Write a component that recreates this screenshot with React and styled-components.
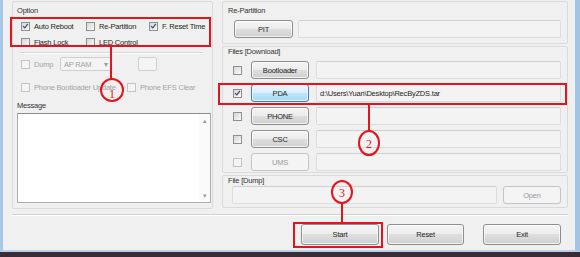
import React from "react";
import styled, { createGlobalStyle, css } from "styled-components";

const GlobalStyle = createGlobalStyle`
    html, body {
        margin: 0;
        padding: 0;
        background: #3a2c36;
    }
    body {
        font-family: "Liberation Sans", Arial, sans-serif;
        font-size: 7.5px;
        letter-spacing: -0.2px;
        color: #1e1e1e;
    }
`;

const Tick = () => (
    <svg width="8" height="8" viewBox="0 0 8 8">
        <path d="M1.2 4.2 L3.2 6.2 L6.8 1.6" fill="none" stroke="#3a4a6a" strokeWidth="1.4" />
    </svg>
);

const Check = ({ checked, disabled, label, width }) => (
    <CheckRow $width={width} $disabled={disabled}>
        <Box $disabled={disabled}>{checked && <Tick />}</Box>
        {label && <span>{label}</span>}
    </CheckRow>
);

/**
 * Name: OdinWindow
 */
const App = () => {
    const files = [
        { name: "Bootloader" },
        { name: "PDA", checked: true, active: true, path: "d:\\Users\\Yuan\\Desktop\\RecByZDS.tar" },
        { name: "PHONE" },
        { name: "CSC" },
        { name: "UMS", disabled: true },
    ];

    return (
        <Screen>
            <GlobalStyle />
            <Window>
                <Top>
                    <LeftPanel>
                        <Caption>Option</Caption>
                        <OptionGrid>
                            <Check checked label="Auto Reboot" />
                            <Check label="Re-Partition" />
                            <Check checked label="F. Reset Time" />
                            <Check label="Flash Lock" />
                            <Check label="LED Control" />
                        </OptionGrid>
                        <Rule />
                        <DumpRow>
                            <Check disabled label="Dump" width={39} />
                            <Select>
                                <span>AP RAM</span>
                                <Arrow>▾</Arrow>
                            </Select>
                            <SmallBox />
                        </DumpRow>
                        <PhoneRow>
                            <Check disabled label="Phone Bootloader Update" width={106} />
                            <Check disabled label="Phone EFS Clear" />
                        </PhoneRow>
                        <Caption $top={8}>Message</Caption>
                        <MessageBox>
                            <MessageText />
                            <ScrollBar>
                                <span>▴</span>
                                <span>▾</span>
                            </ScrollBar>
                        </MessageBox>
                    </LeftPanel>

                    <RightColumn>
                        <Group $height={43}>
                            <Caption $top={4}>Re-Partition</Caption>
                            <PitRow>
                                <Button $w={59} $h={18}>PIT</Button>
                                <Field />
                            </PitRow>
                        </Group>
                        <Group $height={127}>
                            <Caption>Files [Download]</Caption>
                            <FileList>
                                {files.map((f) => (
                                    <FileRow key={f.name}>
                                        <CheckCell>
                                            <Box $disabled={f.disabled}>{f.checked && <Tick />}</Box>
                                        </CheckCell>
                                        <Button $w={58} $h={18} $active={f.active} $disabled={f.disabled}>
                                            {f.name}
                                        </Button>
                                        <Field>{f.path}</Field>
                                    </FileRow>
                                ))}
                            </FileList>
                        </Group>
                        <Group $height={33}>
                            <Caption>File [Dump]</Caption>
                            <DumpFileRow>
                                <Field />
                                <Button $w={58} $h={18} $disabled>Open</Button>
                            </DumpFileRow>
                        </Group>
                    </RightColumn>
                </Top>
                <Separator />
                <ButtonBar>
                    <Button $w={78} $h={21}>Start</Button>
                    <Button $w={77} $h={21}>Reset</Button>
                    <Button $w={78} $h={21} $gap={11}>Exit</Button>
                </ButtonBar>
            </Window>

            <Marks width="580" height="257" viewBox="0 0 580 257">
                <g fill="none" stroke="#e3141c" strokeWidth="2">
                    <rect x="11" y="18" width="199" height="28" />
                    <line x1="111" y1="47" x2="111" y2="79" />
                    <ellipse cx="112" cy="90" rx="11" ry="11" />
                    <rect x="219" y="84" width="347" height="20" />
                    <line x1="369" y1="105" x2="369" y2="131" />
                    <ellipse cx="369" cy="143" rx="10" ry="12" />
                    <line x1="342" y1="203" x2="342" y2="222" />
                    <ellipse cx="342" cy="192" rx="10" ry="11" />
                    <rect x="294" y="223" width="88" height="24" />
                </g>
                <g fill="#e3141c" fontFamily="Liberation Serif, serif" fontSize="12" textAnchor="middle">
                    <text x="112" y="98">1</text>
                    <text x="369" y="148">2</text>
                    <text x="342" y="197">3</text>
                </g>
            </Marks>
        </Screen>
    );
};

export default React.memo(App);

const Screen = styled.div`
    position: relative;
    width: 580px;
    height: 257px;
    overflow: hidden;
    background: #3a2c36;
`;

const Window = styled.div`
    box-sizing: border-box;
    height: 252px;
    display: flex;
    flex-direction: column;
    padding: 1px 7px 0 9px;
    background: #f0f0f0;
    border-left: 3px solid #a9c8e8;
    border-right: 5px solid #a4c4e6;
    border-bottom: 2px solid #b8d1ec;
`;

const Top = styled.div`
    display: flex;
    gap: 9px;
    height: 208px;
`;

const panelBox = css`
    box-sizing: border-box;
    border: 1px solid #dadada;
    border-radius: 2px;
`;

const LeftPanel = styled.section`
    ${panelBox};
    width: 201px;
    height: 208px;
    padding: 4px 0 0 4px;
    display: flex;
    flex-direction: column;
`;

const Caption = styled.div`
    height: 10px;
    line-height: 10px;
    color: #333;
    margin-top: ${(p) => p.$top || 0}px;
`;

const OptionGrid = styled.div`
    display: grid;
    grid-template-columns: 65px 63px auto;
    row-gap: 4px;
    margin-top: 4px;
    padding-left: 4px;
`;

const CheckRow = styled.label`
    display: flex;
    align-items: center;
    gap: 4px;
    height: 12px;
    width: ${(p) => (p.$width ? `${p.$width}px` : "auto")};
    flex-shrink: 0;
    color: ${(p) => (p.$disabled ? "#a3a3a3" : "#1e1e1e")};
    white-space: nowrap;
`;

const Box = styled.span`
    box-sizing: border-box;
    width: 9px;
    height: 9px;
    display: flex;
    align-items: center;
    justify-content: center;
    border: 1px solid ${(p) => (p.$disabled ? "#c4c4c4" : "#8f8f8f")};
    background: ${(p) =>
        p.$disabled ? "#f4f4f4" : "linear-gradient(135deg, #d6d6d6, #fbfbfb)"};
`;

const Rule = styled.div`
    width: 183px;
    height: 1px;
    margin: 4px 0 0 3px;
    background: #d6d6d6;
    box-shadow: 0 1px 0 #fff;
`;

const DumpRow = styled.div`
    display: flex;
    align-items: center;
    height: 14px;
    margin-top: 4px;
    padding-left: 4px;
`;

const Select = styled.div`
    box-sizing: border-box;
    width: 52px;
    height: 14px;
    display: flex;
    align-items: center;
    justify-content: space-between;
    padding: 0 3px 0 3px;
    border: 1px solid #cfcfcf;
    border-radius: 2px;
    background: #f4f4f4;
    color: #a0a0a0;
`;

const Arrow = styled.span`
    font-size: 8px;
    color: #9a9a9a;
`;

const SmallBox = styled.div`
    box-sizing: border-box;
    width: 19px;
    height: 14px;
    margin-left: 26px;
    border: 1px solid #cfcfcf;
    border-radius: 2px;
    background: #f4f4f4;
`;

const PhoneRow = styled.div`
    display: flex;
    margin-top: 10px;
    padding-left: 4px;
`;

const MessageBox = styled.div`
    box-sizing: border-box;
    display: flex;
    width: 194px;
    height: 90px;
    margin-top: 2px;
    border: 1px solid #abadb3;
    border-top-color: #8a8c90;
    background: #fff;
`;

const MessageText = styled.div`
    flex: 1;
`;

const ScrollBar = styled.div`
    width: 11px;
    display: flex;
    flex-direction: column;
    justify-content: space-between;
    align-items: center;
    padding: 3px 0 2px;
    background: #fafafa;
    color: #9a9a9a;
    font-size: 7px;
    line-height: 8px;
`;

const RightColumn = styled.div`
    width: 346px;
    display: flex;
    flex-direction: column;
    gap: 2px;
`;

const Group = styled.section`
    ${panelBox};
    height: ${(p) => p.$height}px;
    padding: 0 6px 0 5px;
`;

const PitRow = styled.div`
    display: flex;
    gap: 5px;
    margin-top: 4px;
    padding-left: 6px;
`;

const FileList = styled.div`
    display: flex;
    flex-direction: column;
    gap: 5px;
    margin-top: 4px;
`;

const FileRow = styled.div`
    display: flex;
    align-items: center;
    gap: 7px;
`;

const CheckCell = styled.div`
    box-sizing: border-box;
    width: 16px;
    padding-left: 5px;
    display: flex;
`;

const DumpFileRow = styled.div`
    display: flex;
    gap: 6px;
    margin-top: 0;
    padding-left: 4px;
`;

const Field = styled.div`
    box-sizing: border-box;
    flex: 1;
    height: 18px;
    display: flex;
    align-items: center;
    padding-left: 3px;
    border: 1px solid #dcdcdc;
    border-top-color: #cfcfcf;
    border-radius: 2px;
    background: #f3f3f3;
    color: #1e1e1e;
    white-space: nowrap;
`;

const Button = styled.button`
    box-sizing: border-box;
    flex-shrink: 0;
    width: ${(p) => p.$w}px;
    height: ${(p) => p.$h}px;
    margin: 0 0 0 ${(p) => p.$gap || 0}px;
    padding: 0;
    font-family: inherit;
    font-size: inherit;
    letter-spacing: inherit;
    color: #1e1e1e;
    border: 1px solid #8e8e8e;
    border-radius: 3px;
    background: linear-gradient(#f4f4f4 0%, #ececec 50%, #dedede 50%, #d0d0d0 100%);
    box-shadow: inset 0 0 0 1px rgba(255, 255, 255, 0.7);

    ${(p) =>
        p.$active &&
        css`
            border-color: #3c7fb1;
            background: linear-gradient(#eaf6fd 0%, #d9f0fc 50%, #bee6fd 50%, #a7d9f5 100%);
        `}

    ${(p) =>
        p.$disabled &&
        css`
            color: #9a9a9a;
            border-color: #c2c5c8;
            background: #f4f4f4;
            box-shadow: none;
        `}
`;

const Separator = styled.div`
    height: 1px;
    margin-top: 5px;
    background: #d0d0d0;
    box-shadow: 0 1px 0 #fff;
`;

const ButtonBar = styled.div`
    display: flex;
    justify-content: flex-end;
    gap: 8px;
    margin-top: 9px;
    padding-right: 7px;
`;

const Marks = styled.svg`
    position: absolute;
    left: 0;
    top: 0;
    pointer-events: none;
`;
